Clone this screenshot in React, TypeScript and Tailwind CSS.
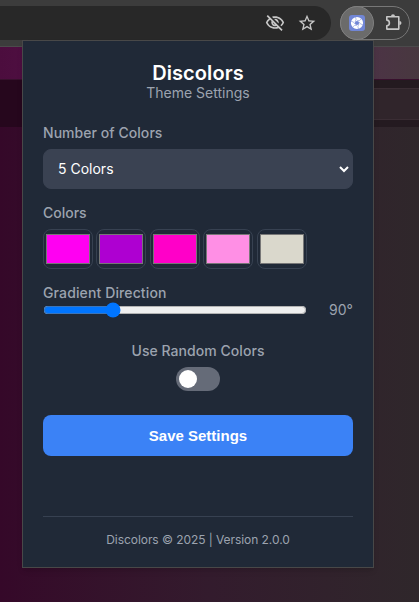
import { useState } from "react";
import { MdOutlineVisibilityOff, MdStarBorder } from "react-icons/md";

const initialColors = ["#ff00f2", "#ae00d1", "#ff00c8", "#ff8fe5", "#dad8cc"];

function ApertureLogo() {
  return (
    <svg viewBox="0 0 16 16" className="size-4">
      <rect width="16" height="16" rx="3" fill="#7186d6" />
      <circle cx="8" cy="8" r="4.1" fill="none" stroke="#fff" strokeWidth="4" />
      {[15, 75, 135, 195, 255, 315].map((angle) => (
        <path
          key={angle}
          d="M7.4 5.8 Q10.2 5.6 11.2 2.8"
          fill="none"
          stroke="#7186d6"
          strokeWidth="0.5"
          transform={`rotate(${angle} 8 8)`}
        />
      ))}
    </svg>
  );
}

function PuzzleIcon() {
  return (
    <svg viewBox="0 0 20 20" className="size-5" fill="none" stroke="currentColor" strokeWidth="1.6">
      <path
        d="M3.8 3.7 H15.8 V16.1 H3.8 V12.7 C5.6 12.5 6.4 11.3 6.4 9.9 C6.4 8.5 5.6 7.3 3.8 7.1 Z"
        strokeLinejoin="round"
      />
      <path d="M8 3.2 A2 2 0 0 1 12 3.2 Z" fill="currentColor" stroke="none" />
      <path d="M16.4 7.9 A2.1 2.1 0 0 1 16.4 12.1 Z" fill="currentColor" stroke="none" />
    </svg>
  );
}

function Toolbar() {
  return (
    <div className="flex h-[47px] items-start border-b border-[#4b4a4b] bg-[#3c3c3c] pt-[6px] text-[#c7c7c7]">
      <div className="flex h-[34px] w-[331px] items-center justify-end gap-3 rounded-r-full bg-[#282828] pr-[14px]">
        <MdOutlineVisibilityOff size={20} />
        <MdStarBorder size={20} />
      </div>
      <div className="ml-[9px] flex h-[34px] w-[70px] items-center justify-between rounded-full border border-[#777] pr-[6px]">
        <div className="-ml-px flex size-[34px] items-center justify-center rounded-full border border-[#808080] bg-[#6b6b6b]">
          <ApertureLogo />
        </div>
        <PuzzleIcon />
      </div>
    </div>
  );
}

function PageBackdrop() {
  return (
    <div className="flex flex-1 flex-col bg-linear-to-r from-[#350829] via-[#331b2d] via-50% to-[#2f272b]">
      <div className="flex h-[33px] justify-between border-b border-[#38102d]">
        <div className="w-[120px] bg-linear-to-r from-[#4c0d3e] to-[#54154a]" />
        <div className="w-[60px] bg-linear-to-r from-[#4d3247] to-[#48383f]" />
      </div>
      <div className="flex h-[47px] justify-between">
        <div className="w-[120px] bg-[#26071d]" />
        <div className="flex w-[60px] flex-col bg-[#241a20] pt-2 pb-[7px]">
          <div className="flex-1 border-y border-[#3a2d34] bg-[#30252b]" />
        </div>
      </div>
    </div>
  );
}

export default function App() {
  const [colors, setColors] = useState(initialColors);
  const [angle, setAngle] = useState(90);
  const [random, setRandom] = useState(false);

  return (
    <div className="relative flex h-[602px] w-[419px] flex-col overflow-hidden font-['Inter',sans-serif]">
      <Toolbar />
      <PageBackdrop />
      <main className="absolute top-[40px] left-[22px] flex h-[528px] w-[352px] flex-col border border-[#484848] bg-[#202937] px-5 text-sm text-[#9ca3af] shadow-md">
        <header className="mt-5 text-center">
          <h1 className="text-xl leading-6 font-semibold tracking-[0.1px] text-white">Discolors</h1>
          <p className="-mt-px leading-[17px]">Theme Settings</p>
        </header>

        <label htmlFor="count" className="mt-[23px] leading-[17px] font-medium tracking-[0.05px]">Number of Colors</label>
        <select
          id="count"
          defaultValue="5"
          className="mt-2 h-10 w-full rounded-lg border border-[#3a4252] bg-[#3a4252] px-[10px] pb-px text-sm text-white"
        >
          <option value="3">3 Colors</option>
          <option value="4">4 Colors</option>
          <option value="5">5 Colors</option>
        </select>

        <div className="mt-[15px] leading-[17px] font-medium">Colors</div>
        <div className="mt-2 flex gap-[3.45px]">
          {colors.map((color, index) => (
            <input
              key={index}
              type="color"
              value={color}
              onChange={(event) =>
                setColors(colors.map((old, i) => (i === index ? event.target.value : old)))
              }
              className="h-10 w-[50px] rounded-lg border border-[#374151] p-0"
            />
          ))}
        </div>

        <label htmlFor="angle" className="mt-[15px] leading-[17px] font-medium tracking-[0.12px]">Gradient Direction</label>
        <div className="flex h-[17px] items-center justify-between">
          <input
            id="angle"
            type="range"
            min="0"
            max="360"
            value={angle}
            onChange={(event) => setAngle(Number(event.target.value))}
            className="h-4 w-[264px]"
          />
          <span className="leading-[17px]">{angle}°</span>
        </div>

        <div className="mt-6 flex flex-col items-center">
          <span className="leading-[17px] font-medium tracking-[0.05px]">Use Random Colors</span>
          <button
            role="switch"
            aria-checked={random}
            onClick={() => setRandom(!random)}
            className={`mt-2 flex h-6 w-11 items-center rounded-full bg-[#656b78] px-[3px] ${random ? "justify-end" : "justify-start"}`}
          >
            <span className="size-[18px] rounded-full bg-white" />
          </button>
        </div>

        <button className="mt-6 h-[41px] shrink-0 rounded-lg bg-[#3b82f6] font-['Liberation_Sans',sans-serif] text-[15px] font-bold text-white">
          Save Settings
        </button>

        <footer className="mt-[60px] border-t border-[#374151] pt-[15px] text-center text-xs leading-[15px] tracking-[-0.06px]">
          Discolors © 2025 | Version 2.0.0
        </footer>
      </main>
    </div>
  );
}
